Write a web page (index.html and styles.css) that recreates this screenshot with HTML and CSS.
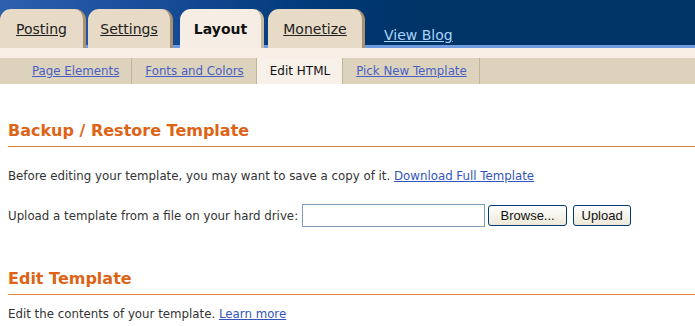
FILE: index.html
```html
<!DOCTYPE html>
<html>
<head>
  <title>Edit HTML</title>
  <meta charset='utf-8'>
  <link rel="stylesheet" href="styles.css">
</head>
<body>

  <div class="header">
    <ul class="tabs">
      <li class="tab tab-posting"><a href="#">Posting</a></li>
      <li class="tab tab-settings"><a href="#">Settings</a></li>
      <li class="tab tab-layout tab-active"><span>Layout</span></li>
      <li class="tab tab-monetize"><a href="#">Monetize</a></li>
      <li class="view-blog"><a href="#">View Blog</a></li>
    </ul>
  </div>

  <div class="strip"></div>

  <ul class="subnav">
    <li><a href="#">Page Elements</a></li>
    <li><a href="#">Fonts and Colors</a></li>
    <li class="subnav-active">Edit HTML</li>
    <li><a href="#">Pick New Template</a></li>
  </ul>

  <div class="content">
    <h2 class="section-title">Backup / Restore Template</h2>
    <p class="text">
      Before editing your template, you may want to save a copy of it. <a href="#">Download Full Template</a>
    </p>
    <form class="upload">
      <span>Upload a template from a file on your hard drive:</span>
      <input type="text" class="file-box">
      <button type="button" class="btn btn-browse">Browse...</button>
      <button type="button" class="btn btn-upload">Upload</button>
    </form>

    <h2 class="section-title section-edit">Edit Template</h2>
    <p class="text text-last">
      Edit the contents of your template. <a href="#">Learn more</a>
    </p>
  </div>

</body>
</html>
```

FILE: styles.css
```css
* {
  box-sizing: border-box;
}
body {
  background: white;
  color: #333;
  font-family: "DejaVu Sans", Verdana, sans-serif;
  font-size: 11.8px;
  margin: 0;
}
a {
  color: #3355bb;
}
.header {
  background: linear-gradient(100deg, #2d5fae 0%, #154a95 25%, #003a78 45%, #003366 60%);
  border-bottom: 3px solid #6f9be0;
  height: 48px;
  padding-top: 12px;
}
.tabs {
  display: flex;
  align-items: flex-end;
  height: 36px;
  list-style: none;
  margin: 0;
  padding: 0;
}
.tab {
  background: #e7dac6;
  border-right: 3px solid #a8926f;
  border-radius: 11px 11px 0 0;
  font-size: 14px;
  height: 39px;
  line-height: 40px;
  position: relative;
  text-align: center;
  z-index: 1;
}
.tab a {
  color: #222;
}
.tab-posting {
  width: 86px;
  margin-right: 2px;
}
.tab-settings {
  width: 85px;
  margin-right: 7px;
}
.tab-layout {
  width: 84px;
  margin-right: 4px;
}
.tab-monetize {
  width: 97px;
}
.tab-active {
  background: #f6eee5;
  border-right-color: #cbbba3;
  color: #111;
  font-weight: bold;
}
.view-blog {
  font-size: 14px;
  line-height: 26px;
  margin-left: 19px;
}
.view-blog a {
  color: #a9d2fa;
}
.strip {
  background: #f9eee6;
  height: 10px;
}
.subnav {
  background: #ddd3bd;
  display: flex;
  height: 26px;
  list-style: none;
  margin: 0;
  padding: 0 0 0 19px;
}
.subnav li {
  border-right: 1px solid #c2b498;
  line-height: 26px;
  padding: 0 12px 0 13px;
}
.subnav a {
  color: #4a5fc4;
}
.subnav-active {
  background: #f8f1ea;
  color: #111;
  font-size: 12px;
}
.content {
  padding: 0 0 0 8px;
}
.section-title {
  border-bottom: 1px solid #e0853c;
  color: #dd6416;
  font-size: 16px;
  margin: 37px 0 0;
  padding: 0 0 6px;
}
.section-edit {
  margin-top: 42px;
}
.text {
  margin: 22px 0 0;
}
.text-last {
  margin-top: 12px;
}
.text a {
  color: #3355bb;
}
.upload {
  align-items: center;
  display: flex;
  margin: 21px 0 0;
}
.file-box {
  border: 1px solid #7f9db9;
  height: 23px;
  margin: 0 3px 0 4px;
  width: 183px;
}
.btn {
  background: linear-gradient(#ffffff, #ece9d8);
  border: 1px solid #003c74;
  border-radius: 3px;
  color: #111;
  font-family: "Liberation Sans", Arial, sans-serif;
  font-size: 13px;
  height: 21px;
  padding: 0;
}
.btn-browse {
  width: 79px;
}
.btn-upload {
  margin-left: 6px;
  width: 58px;
}
```
